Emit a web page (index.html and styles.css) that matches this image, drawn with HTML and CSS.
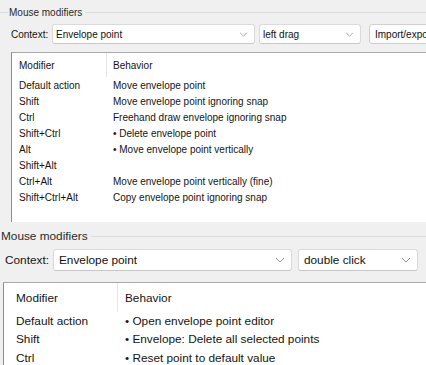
FILE: index.html
```html
<!DOCTYPE html>
<html lang="en">
<head>
    <meta charset="UTF-8">
    <meta name="viewport" content="width=device-width, initial-scale=1.0">
    <title>Mouse modifiers</title>
    <link rel="stylesheet" href="styles.css">
</head>
<body>
    <!-- smaller capture -->
    <div class="panel small">
        <div class="group-title"><span class="lead"></span><span class="title">Mouse modifiers</span><span class="rule"></span></div>
        <div class="context-row">
            <label class="ctx-label">Context:</label>
            <div class="combo combo-ctx">
                <span>Envelope point</span>
                <svg class="chev" viewBox="0 0 10 6"><path d="M1 1 L5 5 L9 1" /></svg>
            </div>
            <div class="combo combo-act">
                <span>left drag</span>
                <svg class="chev" viewBox="0 0 10 6"><path d="M1 1 L5 5 L9 1" /></svg>
            </div>
            <button class="btn">Import/export</button>
        </div>
        <div class="list">
            <div class="list-head">
                <div class="col-mod">Modifier</div>
                <div class="col-beh">Behavior</div>
            </div>
            <div class="row"><div class="col-mod">Default action</div><div class="col-beh">Move envelope point</div></div>
            <div class="row"><div class="col-mod">Shift</div><div class="col-beh">Move envelope point ignoring snap</div></div>
            <div class="row"><div class="col-mod">Ctrl</div><div class="col-beh">Freehand draw envelope ignoring snap</div></div>
            <div class="row"><div class="col-mod">Shift+Ctrl</div><div class="col-beh">• Delete envelope point</div></div>
            <div class="row"><div class="col-mod">Alt</div><div class="col-beh">• Move envelope point vertically</div></div>
            <div class="row"><div class="col-mod">Shift+Alt</div><div class="col-beh"></div></div>
            <div class="row"><div class="col-mod">Ctrl+Alt</div><div class="col-beh">Move envelope point vertically (fine)</div></div>
            <div class="row"><div class="col-mod">Shift+Ctrl+Alt</div><div class="col-beh">Copy envelope point ignoring snap</div></div>
        </div>
    </div>

    <!-- larger capture -->
    <div class="panel large">
        <div class="group-title"><span class="title">Mouse modifiers</span><span class="rule"></span></div>
        <div class="context-row">
            <label class="ctx-label">Context:</label>
            <div class="combo combo-ctx">
                <span>Envelope point</span>
                <svg class="chev" viewBox="0 0 10 6"><path d="M1 1 L5 5 L9 1" /></svg>
            </div>
            <div class="combo combo-act">
                <span>double click</span>
                <svg class="chev" viewBox="0 0 10 6"><path d="M1 1 L5 5 L9 1" /></svg>
            </div>
        </div>
        <div class="list">
            <div class="list-head">
                <div class="col-mod">Modifier</div>
                <div class="col-beh">Behavior</div>
            </div>
            <div class="row"><div class="col-mod">Default action</div><div class="col-beh">• Open envelope point editor</div></div>
            <div class="row"><div class="col-mod">Shift</div><div class="col-beh">• Envelope: Delete all selected points</div></div>
            <div class="row"><div class="col-mod">Ctrl</div><div class="col-beh">• Reset point to default value</div></div>
        </div>
    </div>
</body>
</html>
```

FILE: styles.css
```css
html, body {
    margin: 0;
    padding: 0;
}
body {
    width: 426px;
    height: 365px;
    overflow: hidden;
    background: #f0f0f0;
    font-family: "Liberation Sans", Arial, sans-serif;
    color: #141414;
}
.panel {
    overflow: hidden;
    background: #f0f0f0;
}
.small {
    height: 230px;
    font-size: 10px;
}
.large {
    height: 135px;
    font-size: 11.8px;
}

/* group box title */
.group-title {
    display: flex;
    align-items: center;
    white-space: nowrap;
    color: #2a2a2a;
}
.group-title .rule {
    flex: 1;
    height: 1px;
    background: #dcdcdc;
}
.group-title .lead {
    width: 8px;
    height: 1px;
    background: #dcdcdc;
    margin-right: 1px;
}
.small .group-title {
    height: 24px;
}
.small .group-title .title {
    margin-right: 3px;
}
.large .group-title {
    height: 12px;
    padding-left: 1px;
}
.large .group-title .title {
    margin-right: 3px;
}

/* context row */
.context-row {
    display: flex;
    align-items: center;
    white-space: nowrap;
}
.context-row > * {
    flex-shrink: 0;
}
.small .context-row {
    margin-left: 11px;
    height: 20px;
}
.large .context-row {
    margin-left: 5px;
    margin-top: 7px;
    height: 22px;
}
.small .ctx-label { width: 41px; }
.large .ctx-label { width: 48px; }

.combo {
    box-sizing: border-box;
    height: 100%;
    display: flex;
    align-items: center;
    justify-content: space-between;
    background: #fff;
    border: 1px solid #dadada;
    border-bottom-color: #c8c8c8;
    border-radius: 3px;
    color: #111;
}
.small .combo { padding: 0 6px 0 3px; }
.large .combo { padding: 0 6px 0 5px; }
.small .combo-ctx { width: 203px; }
.small .combo-act { width: 102px; margin-left: 4px; }
.large .combo-ctx { width: 239px; }
.large .combo-act { width: 120px; margin-left: 6px; }

.chev {
    width: 9px;
    height: 5px;
    fill: none;
    stroke: #999;
    stroke-width: 1;
}
.large .chev {
    width: 10px;
    height: 6px;
}

.btn {
    box-sizing: border-box;
    height: 100%;
    width: 90px;
    margin-left: 8px;
    padding: 0 0 0 5px;
    text-align: left;
    font: inherit;
    color: #111;
    background: #fdfdfd;
    border: 1px solid #d0d0d0;
    border-radius: 3px;
}

/* list view */
.list {
    background: #fff;
    border-top: 1px solid #a9a9a9;
    border-left: 1px solid #8e8e8e;
    white-space: nowrap;
}
.small .list {
    margin: 8px 0 0 11px;
    height: 169px;
}
.large .list {
    margin: 11px 0 0 3px;
    height: 120px;
}
.list-head,
.row {
    display: flex;
    align-items: center;
}
.list-head .col-mod {
    border-right: 1px solid #e5e5e5;
    align-self: stretch;
    display: flex;
    align-items: center;
}
.small .list-head { height: 24px; }
.small .row { height: 16px; }
.small .col-mod {
    box-sizing: border-box;
    width: 95px;
    padding-left: 7px;
}
.small .col-beh { padding-left: 6px; }

.large .list-head { height: 29px; }
.large .row { height: 18.3px; }
.large .col-mod {
    box-sizing: border-box;
    width: 114px;
    padding-left: 12px;
}
.large .col-beh { padding-left: 7px; }
```
